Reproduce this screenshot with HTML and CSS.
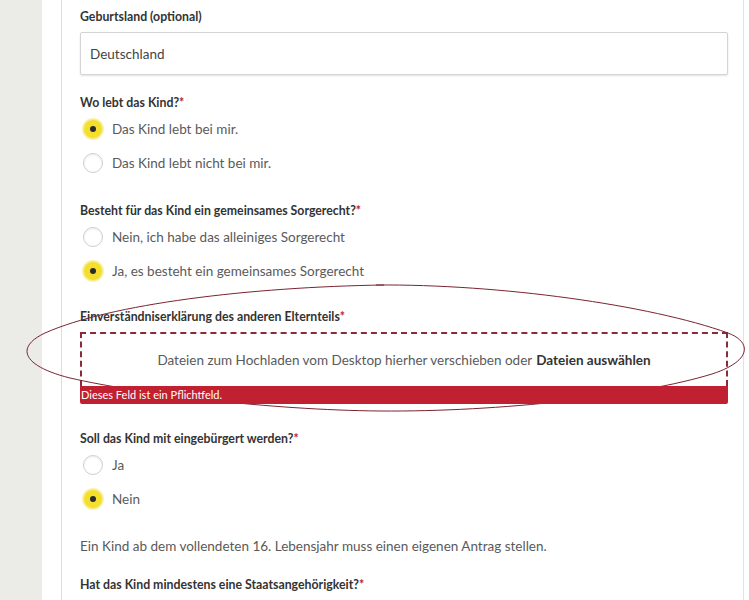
FILE: index.html
```html
<!DOCTYPE html>
<html lang="de">
<head>
    <meta charset="UTF-8">
    <title>Einbürgerung – Angaben zum Kind</title>
    <link rel="stylesheet" href="styles.css">
</head>
<body>
    <div class="layout">
        <div class="sidebar"></div>
        <div class="page">
            <form class="form">
                <div class="field field-input">
                    <label class="label">Geburtsland (optional)</label>
                    <input class="text-input" type="text" value="Deutschland">
                </div>

                <div class="field">
                    <div class="label">Wo lebt das Kind?<span class="req">*</span></div>
                    <label class="radio"><input type="radio" name="wohnort" checked><span class="dot"></span>Das Kind lebt bei mir.</label>
                    <label class="radio"><input type="radio" name="wohnort"><span class="dot"></span>Das Kind lebt nicht bei mir.</label>
                </div>

                <div class="field field-tight">
                    <div class="label">Besteht für das Kind ein gemeinsames Sorgerecht?<span class="req">*</span></div>
                    <label class="radio"><input type="radio" name="sorgerecht"><span class="dot"></span>Nein, ich habe das alleiniges Sorgerecht</label>
                    <label class="radio"><input type="radio" name="sorgerecht" checked><span class="dot"></span>Ja, es besteht ein gemeinsames Sorgerecht</label>
                </div>

                <div class="field field-upload">
                    <div class="label">Einverständniserklärung des anderen Elternteils<span class="req">*</span></div>
                    <div class="dropzone">
                        Dateien zum Hochladen vom Desktop hierher verschieben oder <strong>Dateien auswählen</strong>
                    </div>
                    <div class="error">Dieses Feld ist ein Pflichtfeld.</div>
                </div>

                <div class="field field-tight">
                    <div class="label">Soll das Kind mit eingebürgert werden?<span class="req">*</span></div>
                    <label class="radio"><input type="radio" name="mit"><span class="dot"></span>Ja</label>
                    <label class="radio"><input type="radio" name="mit" checked><span class="dot"></span>Nein</label>
                </div>

                <p class="hint">Ein Kind ab dem vollendeten 16. Lebensjahr muss einen eigenen Antrag stellen.</p>

                <div class="field">
                    <div class="label">Hat das Kind mindestens eine Staatsangehörigkeit?<span class="req">*</span></div>
                    <label class="radio radio-last"><input type="radio" name="sta"><span class="dot"></span>Ja</label>
                </div>
            </form>
        </div>
    </div>

    <!-- Markierung (von Hand gezeichnet) -->
    <svg class="scribble" width="749" height="600" viewBox="0 0 749 600">
        <path d="M 384 285 C 250 287, 110 304, 45 333 C 15 347, 22 366, 70 378 C 140 394, 270 410, 380 411 C 500 412, 640 396, 712 374 C 752 361, 752 342, 728 333 C 650 305, 500 284, 376 285"
              fill="none" stroke="#7a2430" stroke-width="1"/>
    </svg>
</body>
</html>
```

FILE: styles.css
```css
body {
    margin: 0;
    background: #fff;
    font-family: Lato, "Open Sans", sans-serif;
    color: #555;
}
.layout {
    display: flex;
    min-height: 600px;
}
.sidebar {
    width: 42px;
    background: #ebebe8;
    flex-shrink: 0;
}
.page {
    flex: 1;
    margin-left: 19px;
    margin-right: 5px;
    border-left: 1px solid #ddd;
    border-right: 1px solid #e2e2e2;
    padding: 8px 15px 0 18px;
}
.field {
    margin-bottom: 22px;
}
.field-input {
    margin-bottom: 19px;
}
.field-tight {
    margin-bottom: 20px;
}
.field-upload {
    margin-bottom: 26px;
}
.label {
    display: block;
    font-size: 12.3px;
    font-weight: bold;
    line-height: 18px;
    color: #333;
}
.field-input .label,
.field-upload .label {
    margin-bottom: 6px;
}
.req {
    color: #c0202f;
}
.text-input {
    display: block;
    width: 100%;
    height: 43px;
    box-sizing: border-box;
    border: 1px solid #d4d4d4;
    border-radius: 2px;
    box-shadow: 0 1px 2px rgba(0,0,0,0.12);
    padding: 0 9px;
    font-family: inherit;
    font-size: 13.5px;
    color: #444;
}
.radio {
    display: flex;
    align-items: center;
    height: 34px;
    font-size: 13.5px;
    color: #5a5a5a;
}
.radio-last {
    margin-top: 2px;
}
.radio input {
    display: none;
}
.dot {
    width: 18px;
    height: 18px;
    margin: 0 9px 0 3px;
    border: 1px solid #cfcfcf;
    border-radius: 50%;
    background: #fff;
    box-shadow: inset 0 1px 2px rgba(0,0,0,0.08);
    position: relative;
}
.radio input:checked + .dot {
    background: #f3df2c;
    border-color: #f7ec93;
    box-shadow: 0 0 0 1px #faf1b0;
}
.radio input:checked + .dot::after {
    content: "";
    position: absolute;
    left: 6px;
    top: 6px;
    width: 6px;
    height: 6px;
    border-radius: 50%;
    background: #2b2b2b;
}
.dropzone {
    height: 54px;
    box-sizing: border-box;
    border: 2px dashed #8c2a3a;
    border-bottom: none;
    display: flex;
    align-items: center;
    justify-content: center;
    font-size: 13.5px;
    color: #5a5a5a;
}
.dropzone strong {
    color: #333;
    margin-left: 4px;
}
.error {
    position: relative;
    z-index: 2;
    height: 18px;
    line-height: 18px;
    background: #c0202f;
    color: #fff;
    font-size: 11px;
    padding-left: 1px;
    border-radius: 0 0 2px 2px;
}
.hint {
    margin: 0 0 20px;
    font-size: 13.5px;
    line-height: 20px;
    color: #5a5a5a;
}
.scribble {
    position: absolute;
    top: 0;
    left: 0;
    z-index: 1;
    pointer-events: none;
}
```
